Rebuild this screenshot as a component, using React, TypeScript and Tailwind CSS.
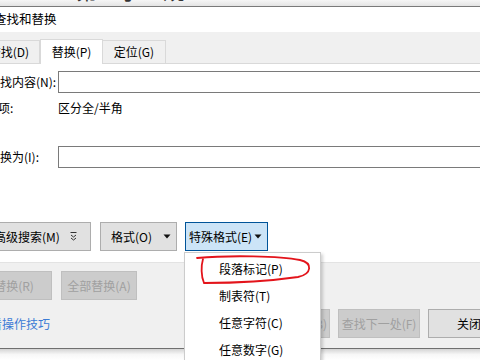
import React from 'react';

const Caret = () => (
  <svg width="8" height="5" viewBox="0 0 8 5" className="shrink-0">
    <path d="M0.5 0.5h7L4 4.5z" fill="#111" />
  </svg>
);

const MoreIcon = () => (
  <svg width="7" height="9" viewBox="0 0 7 9" className="shrink-0">
    <path d="M0.5 0.5h6" stroke="#333" strokeWidth="1" />
    <path d="M1 3l2.5 2 2.5-2M1 6l2.5 2 2.5-2" stroke="#333" strokeWidth="1" fill="none" />
  </svg>
);

const menuItems = ['段落标记(P)', '制表符(T)', '任意字符(C)', '任意数字(G)'];

const App: React.FC = () => {
  return (
    <div
      className="relative w-[480px] h-[360px] overflow-hidden bg-white flex flex-col text-[12px] text-black"
      style={{ fontFamily: '"Noto Sans CJK SC", "Noto Sans", sans-serif' }}
    >
      {/* document behind the dialog, top */}
      <div className="h-[7px] shrink-0 overflow-hidden bg-gradient-to-b from-[#f6f6f6] to-[#e4e4e4] border-b border-[#7a7a7a]">
        <div className="flex mt-[-25px] text-[22px] leading-[28px] text-[#333]">
          <span className="ml-[76px]">第</span>
          <span className="ml-[21px]">子</span>
          <span className="ml-[22px]">规</span>
        </div>
      </div>

      {/* title bar */}
      <div className="h-[25px] shrink-0 flex items-center">
        <span className="ml-[-6px] text-[12.5px]">查找和替换</span>
      </div>

      {/* tabs */}
      <div className="h-[32px] shrink-0 bg-[#f0f0f0] border-b border-[#d9d9d9] flex items-end">
        <div className="ml-[-22px] w-[62px] h-[23px] border border-b-0 border-[#d9d9d9] flex items-center justify-center">
          查找(D)
        </div>
        <div className="w-[63px] h-[25px] mb-[-1px] bg-white border border-b-0 border-[#d9d9d9] flex items-center justify-center">
          替换(P)
        </div>
        <div className="w-[63px] h-[23px] border border-b-0 border-l-0 border-[#d9d9d9] flex items-center justify-center">
          定位(G)
        </div>
      </div>

      {/* content */}
      <div className="h-[198px] shrink-0 flex flex-col">
        <div className="mt-[7px] h-[22px] flex items-center">
          <span className="ml-[-12px] w-[70px] shrink-0">查找内容(N):</span>
          <div className="flex-1 h-[22px] border border-[#7a7a7a] mr-[-10px]" />
        </div>
        <div className="mt-[7px] h-[16px] flex items-center">
          <span className="ml-[-14px] w-[72px] shrink-0">选项:</span>
          <span>区分全/半角</span>
        </div>
        <div className="mt-[30px] h-[22px] flex items-center">
          <span className="ml-[-12px] w-[70px] shrink-0">替换为(I):</span>
          <div className="flex-1 h-[22px] border border-[#7a7a7a] mr-[-10px]" />
        </div>
        <div className="mt-[54px] h-[29px] flex items-center">
          <button className="ml-[-12px] w-[103px] h-[29px] bg-[#e1e1e1] border border-[#adadad] flex items-center pl-[5px] gap-[10px]">
            <span>高级搜索(M)</span>
            <MoreIcon />
          </button>
          <button className="ml-[9px] w-[77px] h-[29px] bg-[#e1e1e1] border border-[#adadad] flex items-center pl-[10px] gap-[11px]">
            <span>格式(O)</span>
            <Caret />
          </button>
          <button className="ml-[8px] w-[83px] h-[29px] bg-[#cce4f7] border border-[#005499] flex items-center pl-[3px] gap-[2px]">
            <span>特殊格式(E)</span>
            <Caret />
          </button>
        </div>
      </div>

      {/* bottom gray area */}
      <div className="h-[87px] shrink-0 bg-[#f0f0f0] border-t border-[#e3e3e3] border-b border-b-[#6f6f6f] flex flex-col">
        <div className="mt-[8px] h-[29px] flex items-center">
          <button className="ml-[-24px] w-[76px] h-[29px] bg-[#cccccc] border border-[#bfbfbf] text-[#a0a0a0] flex items-center justify-center">
            替换(R)
          </button>
          <button className="ml-[9px] w-[76px] h-[29px] bg-[#cccccc] border border-[#bfbfbf] text-[#a0a0a0] flex items-center justify-center">
            全部替换(A)
          </button>
        </div>
        <div className="mt-[9px] h-[29px] flex items-center">
          <div className="ml-[-22px] w-[270px] shrink-0 text-[#3a7bd5]">查看操作技巧</div>
          <button className="w-[82px] h-[29px] shrink-0 bg-[#cccccc] border border-[#bfbfbf] text-[#a0a0a0] flex items-center justify-center">
            查找上一处(B)
          </button>
          <button className="ml-[8px] w-[82px] h-[29px] shrink-0 bg-[#cccccc] border border-[#bfbfbf] text-[#a0a0a0] flex items-center justify-center">
            查找下一处(F)
          </button>
          <button className="ml-[8px] w-[82px] h-[29px] shrink-0 bg-[#e1e1e1] border border-[#adadad] flex items-center justify-center">
            关闭
          </button>
        </div>
      </div>

      {/* document behind the dialog, bottom */}
      <div className="flex-1 overflow-hidden bg-gradient-to-b from-[#d4d4d4] via-[#f7f7f7] to-white">
        <div className="flex mt-[9px] text-[16px] leading-[20px] text-[#333]">
          <span className="ml-[76px]">广</span>
          <span className="ml-[44px]">义</span>
        </div>
      </div>

      {/* dropdown menu */}
      <div className="absolute left-[184px] top-[252px] w-[137px] h-[120px] bg-white border border-[#cccccc] shadow-[2px_2px_3px_rgba(0,0,0,0.18)] pt-[2px]">
        {menuItems.map(item => (
          <div key={item} className="h-[27px] flex items-center pl-[34px]">
            {item}
          </div>
        ))}
      </div>

      {/* red hand-drawn mark */}
      <svg className="absolute left-0 top-0 pointer-events-none" width="480" height="360">
        <path
          d="M197 258 C230 255, 280 256, 300 260 C313 263, 312 274, 298 277 C270 281, 232 283, 204 283 C201 276, 201 266, 203 259"
          stroke="#e3141b"
          strokeWidth="1.8"
          fill="none"
          strokeLinecap="round"
        />
      </svg>
    </div>
  );
};

export default App;
